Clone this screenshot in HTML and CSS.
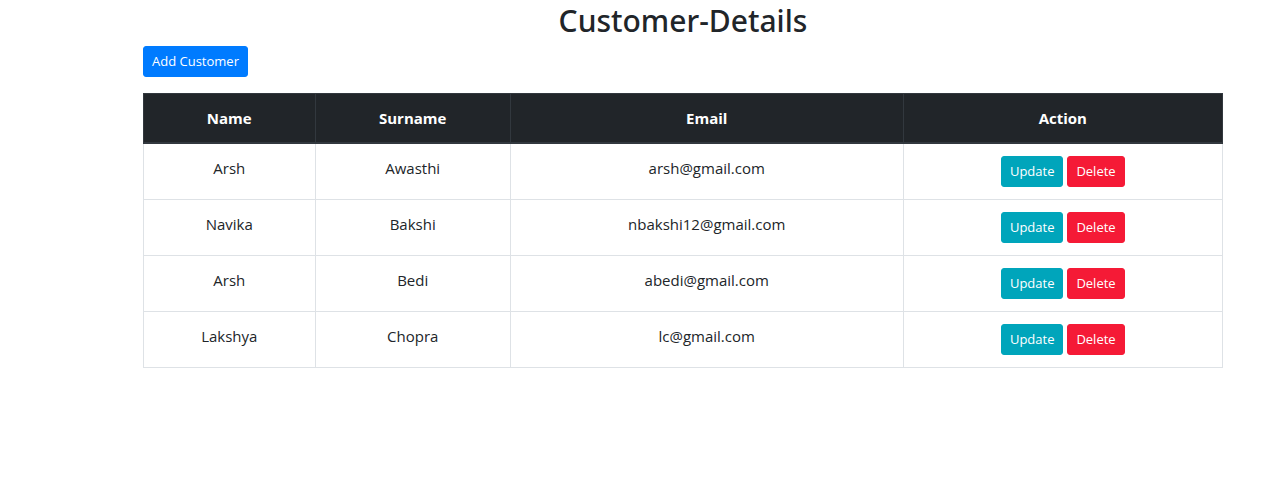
FILE: index.html
```html
<!DOCTYPE html>
<html lang="en">
<head>
<meta charset="utf-8">
<title>Customer-Details</title>
<link rel="stylesheet" href="styles.css">
</head>
<body>
<main class="container">
<h1 class="title">Customer-Details</h1>
<button type="button" class="btn btn-primary">Add Customer</button>
<table class="table">
<colgroup><col class="col-name"><col class="col-surname"><col class="col-email"><col></colgroup>
<thead><tr><th scope="col">Name</th><th scope="col">Surname</th><th scope="col">Email</th><th scope="col">Action</th></tr></thead>
<tbody>
<tr><td>Arsh</td><td>Awasthi</td><td>arsh@gmail.com</td><td><a href="#" class="btn btn-info">Update</a> <a href="#" class="btn btn-danger">Delete</a></td></tr>
<tr><td>Navika</td><td>Bakshi</td><td>nbakshi12@gmail.com</td><td><a href="#" class="btn btn-info">Update</a> <a href="#" class="btn btn-danger">Delete</a></td></tr>
<tr><td>Arsh</td><td>Bedi</td><td>abedi@gmail.com</td><td><a href="#" class="btn btn-info">Update</a> <a href="#" class="btn btn-danger">Delete</a></td></tr>
<tr><td>Lakshya</td><td>Chopra</td><td>lc@gmail.com</td><td><a href="#" class="btn btn-info">Update</a> <a href="#" class="btn btn-danger">Delete</a></td></tr>
</tbody>
</table>
</main>
</body>
</html>
```
FILE: styles.css
```css
*, *::before, *::after { box-sizing: border-box; }
body {
  margin: 0;
  background: #fff;
  color: #212529;
  font: 400 15px/24px "Open Sans", "Noto Sans", sans-serif;
}
.container { margin: 0 47px 0 143px; }
.title {
  margin: 0;
  padding-bottom: 4px;
  font-family: "Noto Sans", "Open Sans", sans-serif;
  font-size: 30px;
  font-weight: 500;
  line-height: 42px;
  text-align: center;
}
.btn {
  display: inline-block;
  padding: 4px 8px;
  border: 1px solid transparent;
  border-radius: 3px;
  color: #fff;
  font: 400 13px/21px "Open Sans", "Noto Sans", sans-serif;
  text-align: center;
  text-decoration: none;
  vertical-align: middle;
  cursor: pointer;
}
.btn-primary { background: #007bff; border-color: #007bff; }
.btn-info { background: #00a5bb; border-color: #00a5bb; }
.btn-danger { background: #f51a36; border-color: #f51a36; }
.table {
  width: 100%;
  margin-top: 16px;
  border-collapse: collapse;
  border: 1px solid #dee2e6;
  table-layout: fixed;
  text-align: center;
}
.col-name { width: 15.9%; }
.col-surname { width: 18.1%; }
.col-email { width: 36.4%; }
.table th, .table td {
  padding: 12px;
  border: 1px solid #dee2e6;
  vertical-align: top;
}
.table th {
  border-color: #32383e;
  border-bottom-width: 2px;
  background: #212529;
  color: #fff;
  font-weight: 700;
}
```
